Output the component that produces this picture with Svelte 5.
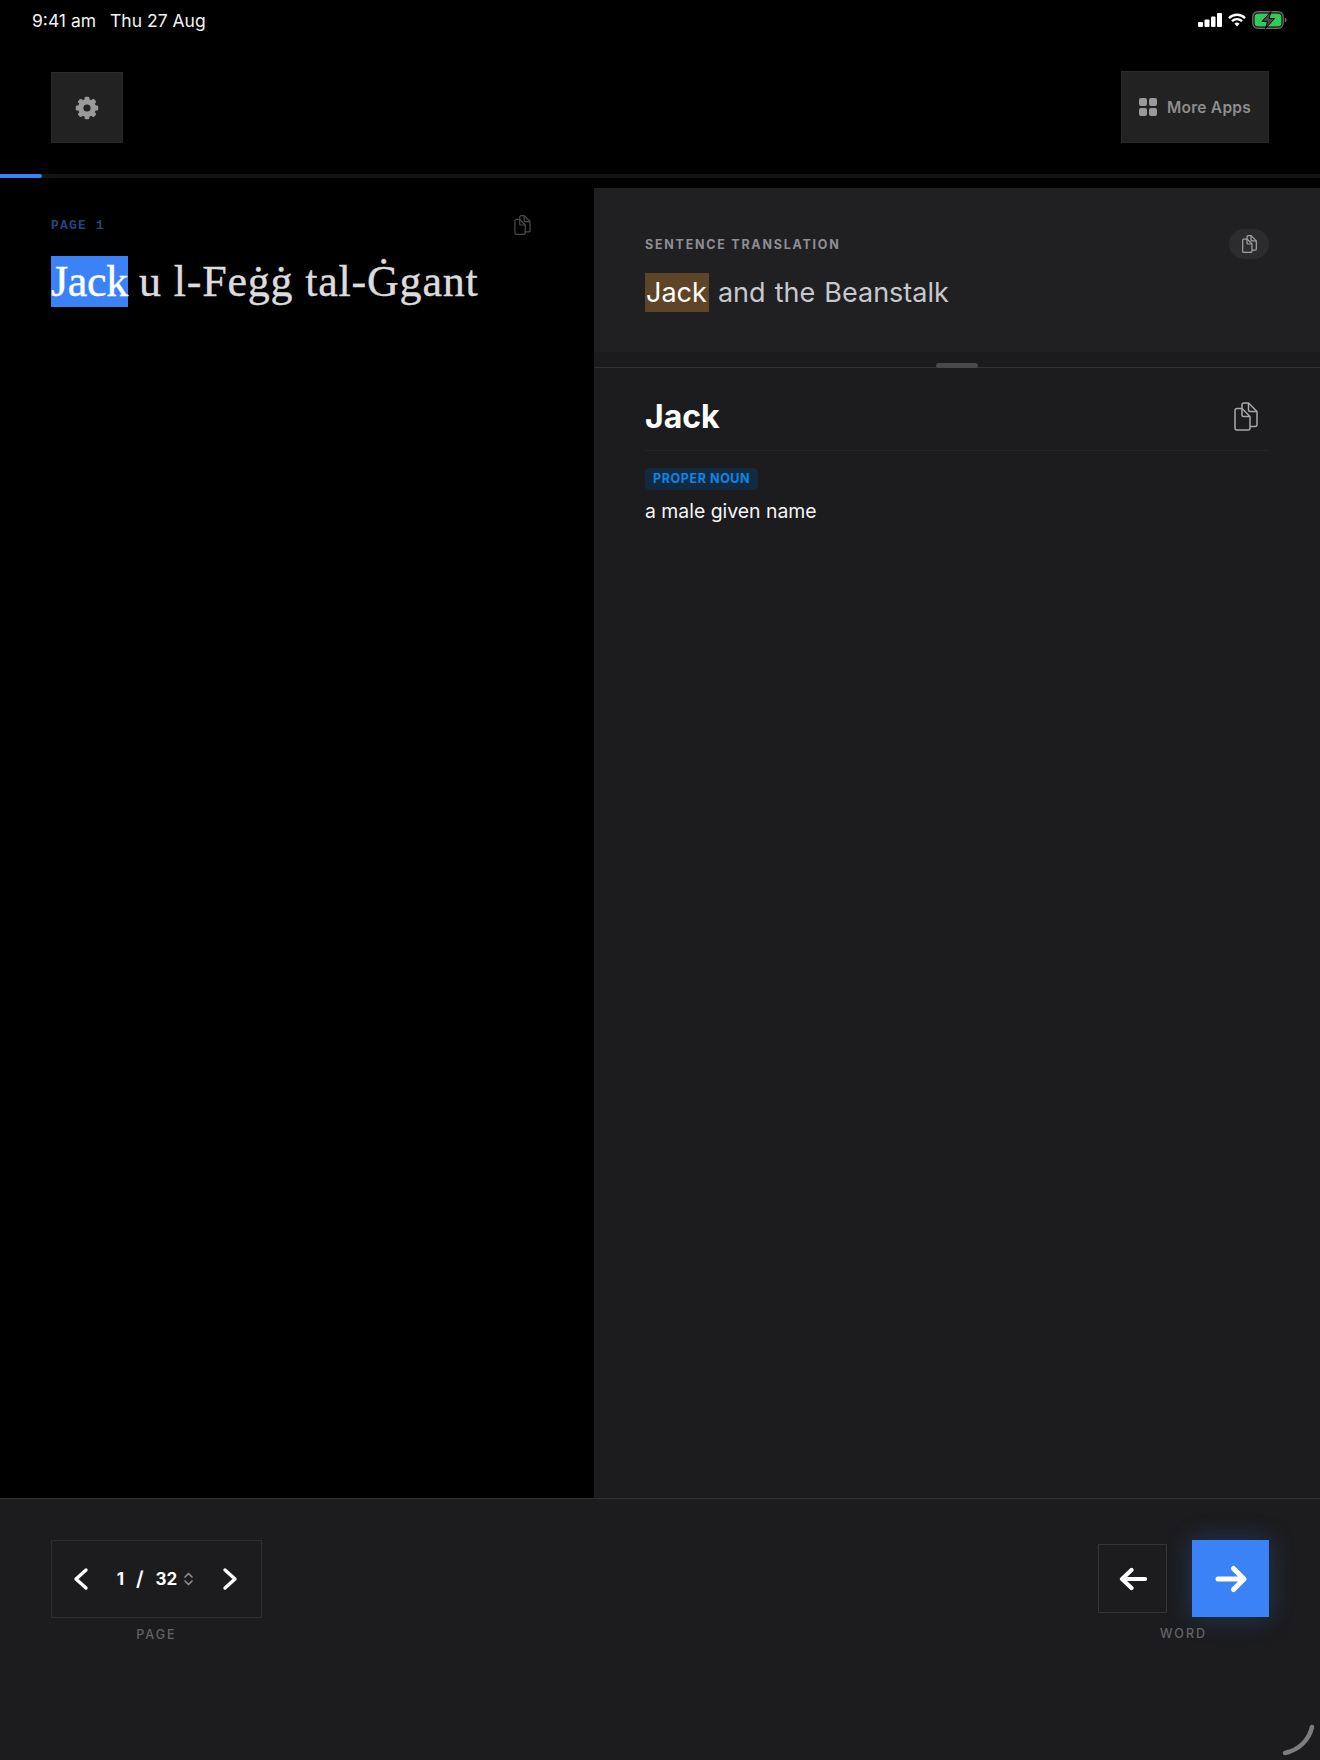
<script lang="ts">
    const pageLabel = "PAGE 1";
    const rest = "u l-Feġġ tal-Ġgant";
    const gearTeeth = [0, 45, 90, 135, 180, 225, 270, 315];
</script>

{#snippet copyIcon(width: number, height: number, color: string, weight: number)}
    <svg {width} {height} viewBox="0 0 24 29" fill="none" stroke={color} stroke-width={weight} stroke-linejoin="round">
        <path d="M8 6.5 H3 a2 2 0 0 0-2 2 V26 a2 2 0 0 0 2 2 H14 a2 2 0 0 0 2-2 V14.5 Z" />
        <path d="M8 6.5 V13 a1.5 1.5 0 0 0 1.5 1.5 H16" />
        <path d="M8 6.5 V3 a2 2 0 0 1 2-2 H14.5 L23 9.5 V22.5 a2 2 0 0 1-2 2 H16" />
        <path d="M14.5 1 V8 a1.5 1.5 0 0 0 1.5 1.5 H23" />
    </svg>
{/snippet}

<div class="app">
    <div class="status">
        <div class="time"><span>9:41 am</span><span>Thu 27 Aug</span></div>
        <div class="status-icons">
            <svg width="24" height="14" viewBox="0 0 24 14" fill="#fff">
                <rect x="0" y="9" width="5" height="5" rx="1" />
                <rect x="6.5" y="6.5" width="5" height="7.5" rx="1" />
                <rect x="13" y="3.5" width="4.5" height="10.5" rx="1" />
                <rect x="19" y="0" width="5" height="14" rx="1" />
            </svg>
            <svg width="18" height="14" viewBox="0 0 19 14" fill="none" stroke="#fff" stroke-width="2.4">
                <path d="M1 5 A12 12 0 0 1 18 5" />
                <path d="M4.2 8.2 A7.5 7.5 0 0 1 14.8 8.2" />
                <path d="M9.5 13.8 L6.8 11 A3.8 3.8 0 0 1 12.2 11 Z" fill="#fff" stroke="none" />
            </svg>
            <svg width="35" height="18" viewBox="0 0 35 18">
                <rect x="0.8" y="0.8" width="30.4" height="16.4" rx="5" fill="none" stroke="#6e6e6e" stroke-width="1.4" />
                <rect x="2.5" y="2.5" width="27" height="13" rx="3.5" fill="#34c759" />
                <path d="M32.8 6.5 a2.6 2.6 0 0 1 0 5 z" fill="#6e6e6e" />
                <path d="M19 0.5 L10 10.5 H15.5 L13.5 17.5 L22.5 7.5 H17 Z" fill="#4a4a4a" stroke="#000" stroke-width="1" />
            </svg>
        </div>
    </div>

    <div class="toolbar">
        <button class="tool-btn square" aria-label="Settings">
            <svg width="24" height="24" viewBox="0 0 24 24" fill="#9a9a9a">
                {#each gearTeeth as angle}
                    <rect x="9.6" y="0.8" width="4.8" height="5" rx="1.2" transform="rotate({angle} 12 12)" />
                {/each}
                <circle cx="12" cy="12" r="6.3" fill="none" stroke="#9a9a9a" stroke-width="5.4" />
            </svg>
        </button>
        <button class="tool-btn apps">
            <svg width="18" height="18" viewBox="0 0 18 18" fill="#9a9a9a">
                <rect x="0" y="0" width="8" height="8" rx="2" />
                <rect x="10" y="0" width="8" height="8" rx="2" />
                <rect x="0" y="10" width="8" height="8" rx="2" />
                <rect x="10" y="10" width="8" height="8" rx="2" />
            </svg>
            More Apps
        </button>
    </div>

    <div class="progress"><div class="progress-fill"></div></div>

    <main class="panes">
        <section class="source">
            <div class="source-head">
                <span class="page-label">{pageLabel}</span>
                {@render copyIcon(17, 20, "#4a4a4a", 1.8)}
            </div>
            <p class="source-text"><span class="word-hl">Jack</span> <span class="rest">{rest}</span></p>
        </section>

        <section class="detail">
            <div class="translation">
                <div class="translation-head">
                    <span class="eyebrow">SENTENCE TRANSLATION</span>
                    <span class="copy-pill">{@render copyIcon(15, 18, "#a0a0a0", 2)}</span>
                </div>
                <p class="translation-text"><span class="tr-hl">Jack</span> and the Beanstalk</p>
            </div>
            <div class="divider"><span class="handle"></span></div>
            <div class="entry">
                <div class="entry-head">
                    <h2>Jack</h2>
                    <span class="entry-copy">{@render copyIcon(24, 29, "#a8a8a8", 1.5)}</span>
                </div>
                <span class="pos">PROPER NOUN</span>
                <p class="gloss">a male given name</p>
            </div>
        </section>
    </main>

    <footer class="footer">
        <div class="control page-control">
            <div class="pager">
                <svg width="16" height="24" viewBox="0 0 16 24" fill="none" stroke="#fff" stroke-width="3.4" stroke-linecap="round" stroke-linejoin="round"><path d="M13 3 L3 12 L13 21" /></svg>
                <div class="pager-num">
                    <span>1</span><span class="slash">/</span><span>32</span>
                    <svg width="11" height="14" viewBox="0 0 11 14" fill="none" stroke="#8a8a8a" stroke-width="1.7" stroke-linecap="round" stroke-linejoin="round"><path d="M2 5 L5.5 1.5 L9 5 M2 9 L5.5 12.5 L9 9" /></svg>
                </div>
                <svg width="16" height="24" viewBox="0 0 16 24" fill="none" stroke="#fff" stroke-width="3.4" stroke-linecap="round" stroke-linejoin="round"><path d="M3 3 L13 12 L3 21" /></svg>
            </div>
            <span class="caption">PAGE</span>
        </div>
        <div class="control word-control">
            <div class="word-btns">
                <button class="word-btn prev" aria-label="Previous word">
                    <svg width="28" height="24" viewBox="0 0 28 24" fill="none" stroke="#fff" stroke-width="4.2" stroke-linecap="round" stroke-linejoin="round"><path d="M26 12 H3 M12.5 3 L3 12 L12.5 21" /></svg>
                </button>
                <button class="word-btn next" aria-label="Next word">
                    <svg width="32" height="28" viewBox="0 0 32 28" fill="none" stroke="#fff" stroke-width="5" stroke-linecap="round" stroke-linejoin="round"><path d="M3 14 H28 M18.5 3.5 L29 14 L18.5 24.5" /></svg>
                </button>
            </div>
            <span class="caption">WORD</span>
        </div>
    </footer>

    <svg class="corner" width="34" height="34" viewBox="0 0 34 34" fill="none" stroke="#7d7d7d" stroke-width="4.5" stroke-linecap="round"><path d="M30 3 C27 16 17 26 3 29" /></svg>
</div>

<style>
    :global(body) {
        margin: 0;
        background: #000;
    }

    .app {
        position: relative;
        width: 1320px;
        height: 1760px;
        overflow: hidden;
        display: flex;
        flex-direction: column;
        background: #000;
        color: #fff;
        font-family: Inter, "Liberation Sans", sans-serif;
    }

    .status {
        height: 40px;
        flex: none;
        padding: 0 33px 0 32px;
        display: flex;
        align-items: center;
        justify-content: space-between;
        box-sizing: border-box;
    }

    .time {
        display: flex;
        gap: 14px;
        font-size: 17.5px;
        color: #f2f2f2;
    }

    .status-icons {
        display: flex;
        align-items: center;
        gap: 6px;
    }

    .toolbar {
        height: 134px;
        flex: none;
        padding: 31px 51px 0;
        box-sizing: border-box;
        display: flex;
        justify-content: space-between;
        align-items: flex-start;
    }

    .tool-btn {
        height: 72px;
        background: #222222;
        border: 1px solid #2a2a2a;
        color: #8e8e8e;
        display: flex;
        align-items: center;
        justify-content: center;
        gap: 10px;
        padding: 0;
        font-family: inherit;
        font-size: 15.5px;
        font-weight: 600;
        letter-spacing: 0.25px;
    }

    .square {
        width: 72px;
        height: 71px;
        margin-top: 1px;
    }

    .apps {
        width: 148px;
    }

    .progress {
        height: 4px;
        flex: none;
        background: #141414;
    }

    .progress-fill {
        width: 42px;
        height: 100%;
        background: #3b82f6;
        border-radius: 0 2px 2px 0;
    }

    .panes {
        flex: 1;
        min-height: 0;
        margin-top: 10px;
        display: grid;
        grid-template-columns: 594px 1fr;
    }

    .source {
        padding: 25px 63px 0 51px;
        background: #000;
    }

    .source-head {
        display: flex;
        justify-content: space-between;
        align-items: center;
        height: 24px;
    }

    .page-label {
        font-family: "Liberation Mono", monospace;
        font-weight: 700;
        font-size: 13px;
        letter-spacing: 1.2px;
        color: #24457f;
    }

    .source-text {
        margin: 19px 0 0;
        font-family: "Liberation Serif", serif;
        font-size: 44px;
        line-height: 51px;
        -webkit-text-stroke: 0.4px currentColor;
        color: #dcdcdc;
        white-space: nowrap;
    }

    .word-hl {
        display: inline-block;
        background: #3b82f6;
        color: #fff;
        letter-spacing: -0.27px;
    }

    .rest {
        letter-spacing: 0.8px;
    }

    .detail {
        background: #1c1c1e;
        display: flex;
        flex-direction: column;
        min-width: 0;
    }

    .translation {
        height: 164px;
        flex: none;
        box-sizing: border-box;
        padding: 41px 51px 0;
        background: #202023;
    }

    .translation-head {
        display: flex;
        justify-content: space-between;
        align-items: center;
        height: 30px;
    }

    .eyebrow {
        font-size: 12.5px;
        font-weight: 700;
        letter-spacing: 1.75px;
        color: #8e8e93;
    }

    .copy-pill {
        width: 40px;
        height: 30px;
        border-radius: 15px;
        background: #2c2c2f;
        display: flex;
        align-items: center;
        justify-content: center;
    }

    .translation-text {
        margin: 14px 0 0;
        font-size: 27px;
        line-height: 39px;
        color: #c8c8cc;
        word-spacing: 1.5px;
        white-space: nowrap;
    }

    .tr-hl {
        display: inline-block;
        background: #5f4527;
        color: #fff;
        padding: 0 2px 0 1px;
    }

    .divider {
        position: relative;
        height: 15px;
        flex: none;
        background: #1b1b1d;
        border-bottom: 1px solid #323235;
    }

    .handle {
        position: absolute;
        left: 50%;
        bottom: -1px;
        margin-left: -21px;
        width: 42px;
        height: 5px;
        border-radius: 3px;
        background: #48484a;
    }

    .entry {
        padding: 20px 51px 0;
        display: flex;
        flex-direction: column;
        align-items: flex-start;
    }

    .entry-head {
        align-self: stretch;
        height: 56px;
        display: flex;
        align-items: center;
        justify-content: space-between;
        border-bottom: 1px solid #252527;
        margin-bottom: 17px;
        padding-bottom: 6px;
    }

    h2 {
        margin: 0;
        font-size: 32px;
        font-weight: 700;
        color: #fff;
    }

    .entry-copy {
        display: flex;
        margin-right: 11px;
    }

    .pos {
        background: #122a40;
        color: #0f85e6;
        font-size: 12.5px;
        font-weight: 700;
        letter-spacing: 0.6px;
        padding: 0 8px;
        line-height: 22px;
        border-radius: 5px;
    }

    .gloss {
        margin: 7px 0 0;
        font-size: 19.4px;
        line-height: 28px;
        color: #f5f5f5;
    }

    .footer {
        height: 262px;
        flex: none;
        box-sizing: border-box;
        background: #1c1c1e;
        border-top: 1px solid #333336;
        padding: 41px 51px 0;
        display: flex;
        justify-content: space-between;
        align-items: flex-start;
    }

    .control {
        display: flex;
        flex-direction: column;
        align-items: center;
    }

    .pager {
        width: 211px;
        height: 78px;
        box-sizing: border-box;
        border: 1px solid #2e2e30;
        padding: 0 23px 0 21px;
        display: flex;
        align-items: center;
        justify-content: space-between;
    }

    .pager-num {
        display: flex;
        align-items: center;
        gap: 12px;
        font-size: 17px;
        font-weight: 700;
    }

    .pager-num svg {
        margin-left: -6px;
    }

    .slash {
        font-weight: 600;
        font-size: 20px;
    }

    .caption {
        margin-top: 9px;
        font-size: 12.5px;
        font-weight: 500;
        letter-spacing: 2px;
        color: #636366;
    }

    .word-btns {
        display: flex;
        align-items: center;
        gap: 25px;
    }

    .word-btn {
        display: flex;
        align-items: center;
        justify-content: center;
        padding: 0;
        box-sizing: border-box;
    }

    .prev {
        width: 69px;
        height: 69px;
        background: transparent;
        border: 1px solid #353537;
    }

    .next {
        width: 77px;
        height: 77px;
        background: #3b82f6;
        border: none;
        box-shadow: 0 0 24px rgba(59, 130, 246, 0.28);
    }

    .corner {
        position: absolute;
        right: 4px;
        bottom: 2px;
    }
</style>
